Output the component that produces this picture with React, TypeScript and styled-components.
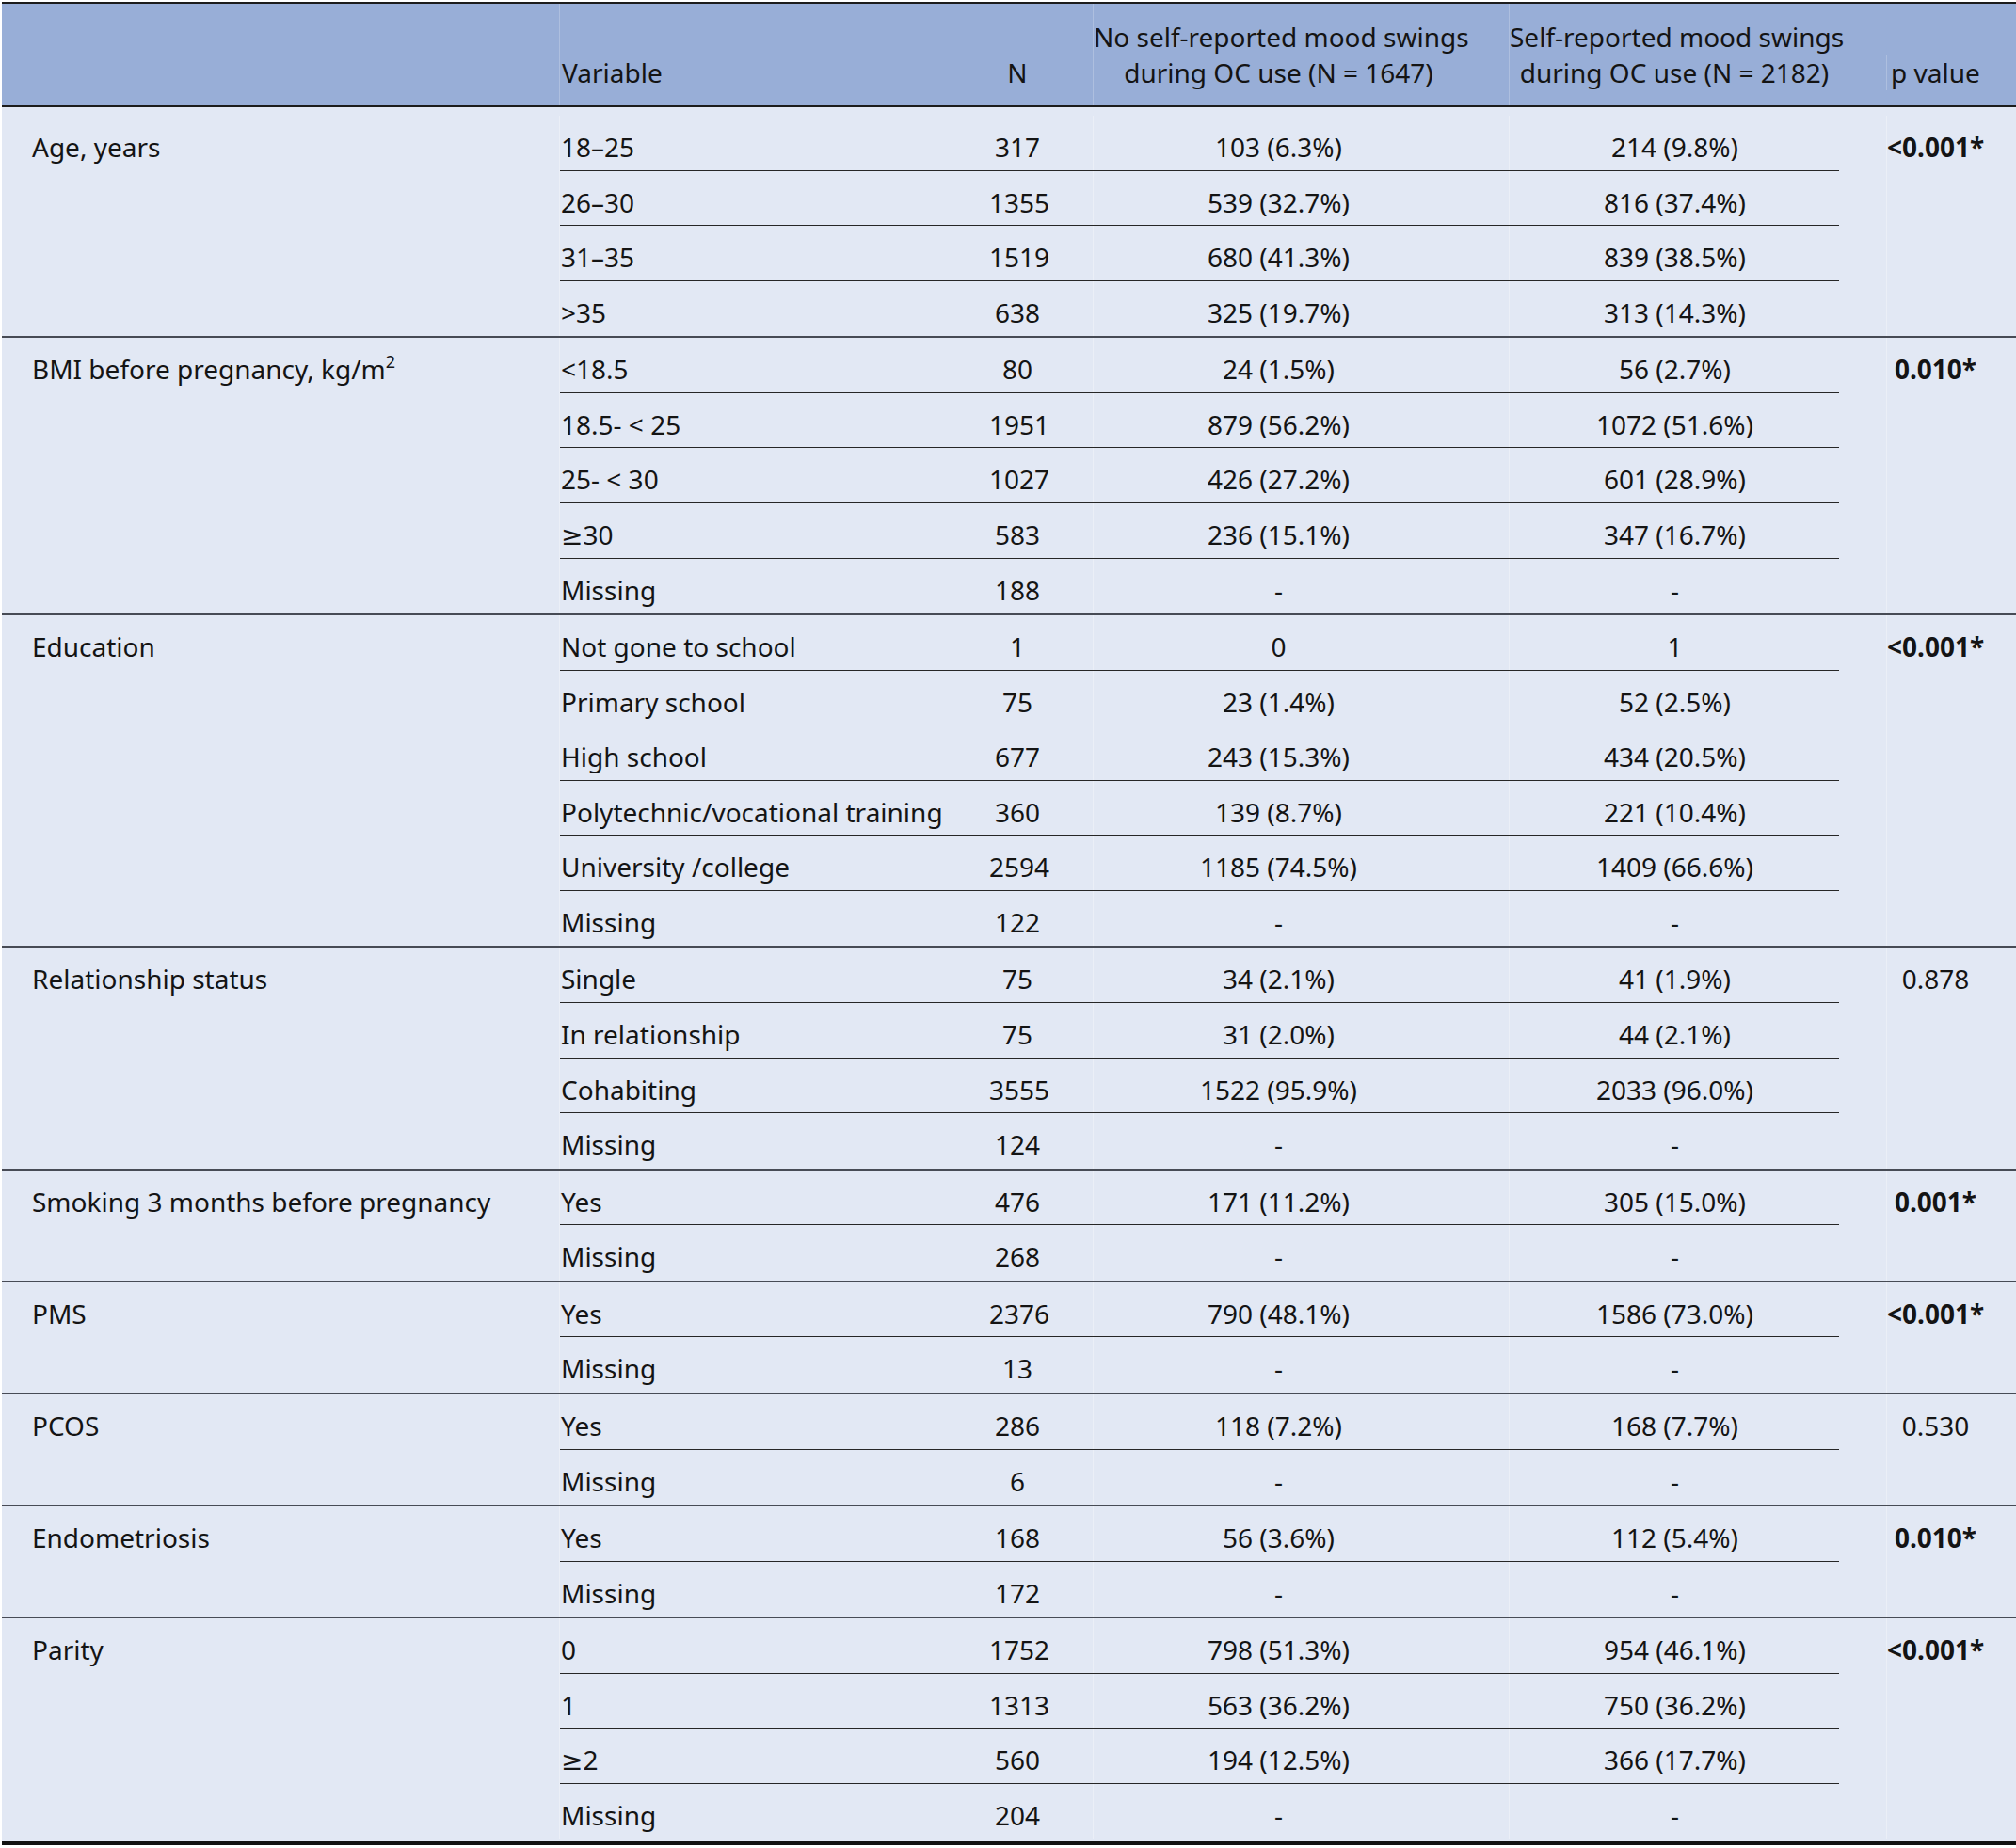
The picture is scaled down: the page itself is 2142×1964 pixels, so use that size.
import React from 'react'
import styled, { createGlobalStyle } from 'styled-components'

const GlobalStyle = createGlobalStyle`
    html, body {
        margin: 0;
        padding: 0;
        background: #ffffff;
    }
    body {
        font-family: "Noto Sans", "DejaVu Sans", sans-serif;
    }
`

const Table = styled.div`
    width: 2140px;
    margin: 2px 0 0 2px;
    border-top: 2px solid #1c1c1c;
    border-bottom: 4px solid #111111;
    background: #e2e8f4;
    color: #141414;
    font-size: 28px;
    line-height: 38px;
`

const Header = styled.div`
    display: grid;
    grid-template-columns: 592px 457px 110px 442px 351px 188px;
    background: #98aed7;
    border-bottom: 2px solid #1c1c1c;
`

const HeadCell = styled.div<{ $align?: string; $pr?: number; $pl?: number; $divider?: boolean }>`
    box-sizing: border-box;
    display: flex;
    flex-direction: column;
    justify-content: flex-end;
    padding: 16px ${({ $pr }) => $pr || 0}px 16px ${({ $pl, $align }) => ($align === 'left' ? 2 : $pl || 0)}px;
    text-align: ${({ $align }) => $align || 'center'};
    white-space: nowrap;
    min-height: 108px;
    border-left: ${({ $divider }) => ($divider ? '1px solid rgba(255, 255, 255, 0.22)' : 'none')};
    &:nth-child(2) {
        border-left: 1px solid rgba(255, 255, 255, 0.22);
    }
`

const Body = styled.div`
    padding: 9px 0 3px;
`

const GroupRow = styled.div`
    display: grid;
    grid-template-columns: 592px 1360px 188px;
    & + & {
        border-top: 2px solid #474b55;
    }
`

const LabelCell = styled.div`
    padding: 14px 0 0 32px;
    white-space: nowrap;
`

const SubRows = styled.div`
    display: flex;
    flex-direction: column;
    border-left: 1px solid rgba(255, 255, 255, 0.3);
`

const SubRow = styled.div`
    display: grid;
    grid-template-columns: 456px 110px 442px 352px;
    box-sizing: border-box;
    height: 58.57px;
    border-bottom: 1px solid #262626;
    &:last-child {
        border-bottom: none;
    }
`

const VarCell = styled.div`
    padding: 14px 0 0 1px;
    white-space: nowrap;
`

const NumCell = styled.div<{ $pr?: number; $divider?: boolean }>`
    box-sizing: border-box;
    padding: 14px ${({ $pr }) => $pr || 0}px 0 0;
    text-align: center;
    white-space: nowrap;
    border-left: ${({ $divider }) => ($divider ? '1px solid rgba(255, 255, 255, 0.3)' : 'none')};
`

const PCell = styled.div<{ $bold?: boolean }>`
    padding-left: 50px;
    font-weight: ${({ $bold }) => ($bold ? 700 : 400)};
    display: flex;
`

const PDivider = styled.div`
    flex: 1;
    box-sizing: border-box;
    padding: 14px 34px 0 0;
    text-align: center;
    white-space: nowrap;
    border-left: 1px solid rgba(255, 255, 255, 0.3);
`

const HeadP = styled.div`
    box-sizing: border-box;
    padding-right: 34px;
    text-align: center;
    border-left: 1px solid rgba(255, 255, 255, 0.22);
`

const Sup = styled.sup`
    font-size: 18px;
    line-height: 0;
    vertical-align: 12px;
`

type Group = {
  label: string
  p: string
  bold?: boolean
  rows: string[][]
}

const groups: Group[] = [
  {
    label: 'Age, years',
    p: '<0.001*',
    bold: true,
    rows: [
      ['18–25', '317', '103 (6.3%)', '214 (9.8%)'],
      ['26–30', '1355', '539 (32.7%)', '816 (37.4%)'],
      ['31–35', '1519', '680 (41.3%)', '839 (38.5%)'],
      ['>35', '638', '325 (19.7%)', '313 (14.3%)'],
    ],
  },
  {
    label: 'BMI',
    p: '0.010*',
    bold: true,
    rows: [
      ['<18.5', '80', '24 (1.5%)', '56 (2.7%)'],
      ['18.5- < 25', '1951', '879 (56.2%)', '1072 (51.6%)'],
      ['25- < 30', '1027', '426 (27.2%)', '601 (28.9%)'],
      ['≥30', '583', '236 (15.1%)', '347 (16.7%)'],
      ['Missing', '188', '-', '-'],
    ],
  },
  {
    label: 'Education',
    p: '<0.001*',
    bold: true,
    rows: [
      ['Not gone to school', '1', '0', '1'],
      ['Primary school', '75', '23 (1.4%)', '52 (2.5%)'],
      ['High school', '677', '243 (15.3%)', '434 (20.5%)'],
      ['Polytechnic/vocational training', '360', '139 (8.7%)', '221 (10.4%)'],
      ['University /college', '2594', '1185 (74.5%)', '1409 (66.6%)'],
      ['Missing', '122', '-', '-'],
    ],
  },
  {
    label: 'Relationship status',
    p: '0.878',
    rows: [
      ['Single', '75', '34 (2.1%)', '41 (1.9%)'],
      ['In relationship', '75', '31 (2.0%)', '44 (2.1%)'],
      ['Cohabiting', '3555', '1522 (95.9%)', '2033 (96.0%)'],
      ['Missing', '124', '-', '-'],
    ],
  },
  {
    label: 'Smoking 3 months before pregnancy',
    p: '0.001*',
    bold: true,
    rows: [
      ['Yes', '476', '171 (11.2%)', '305 (15.0%)'],
      ['Missing', '268', '-', '-'],
    ],
  },
  {
    label: 'PMS',
    p: '<0.001*',
    bold: true,
    rows: [
      ['Yes', '2376', '790 (48.1%)', '1586 (73.0%)'],
      ['Missing', '13', '-', '-'],
    ],
  },
  {
    label: 'PCOS',
    p: '0.530',
    rows: [
      ['Yes', '286', '118 (7.2%)', '168 (7.7%)'],
      ['Missing', '6', '-', '-'],
    ],
  },
  {
    label: 'Endometriosis',
    p: '0.010*',
    bold: true,
    rows: [
      ['Yes', '168', '56 (3.6%)', '112 (5.4%)'],
      ['Missing', '172', '-', '-'],
    ],
  },
  {
    label: 'Parity',
    p: '<0.001*',
    bold: true,
    rows: [
      ['0', '1752', '798 (51.3%)', '954 (46.1%)'],
      ['1', '1313', '563 (36.2%)', '750 (36.2%)'],
      ['≥2', '560', '194 (12.5%)', '366 (17.7%)'],
      ['Missing', '204', '-', '-'],
    ],
  },
]

// the BMI label carries a superscript unit
const renderLabel = (label: string) =>
  label === 'BMI' ? (
    <>
      BMI before pregnancy, kg/m<Sup>2</Sup>
    </>
  ) : (
    label
  )

const App: React.FC = () => {
  return (
    <>
      <GlobalStyle />
      <Table>
        <Header>
          <HeadCell />
          <HeadCell $align='left'>Variable</HeadCell>
          <HeadCell $pr={50}>N</HeadCell>
          <HeadCell $pr={48} $divider>
            <div>No self-reported mood swings</div>
            <div>during OC use (N = 1647)</div>
          </HeadCell>
          <HeadCell $divider>
            <div>Self-reported mood swings</div>
            <div>during OC use (N = 2182)</div>
          </HeadCell>
          <HeadCell $pl={50}>
            <HeadP>p value</HeadP>
          </HeadCell>
        </Header>
        <Body>
          {groups.map((g, gi) => (
            <GroupRow key={gi}>
              <LabelCell>{renderLabel(g.label)}</LabelCell>
              <SubRows>
                {g.rows.map((r, ri) => (
                  <SubRow key={ri}>
                    <VarCell>{r[0]}</VarCell>
                    <NumCell $pr={50}>{r[1]}</NumCell>
                    <NumCell $pr={48} $divider>{r[2]}</NumCell>
                    <NumCell $divider>{r[3]}</NumCell>
                  </SubRow>
                ))}
              </SubRows>
              <PCell $bold={g.bold}>
                <PDivider>{g.p}</PDivider>
              </PCell>
            </GroupRow>
          ))}
        </Body>
      </Table>
    </>
  )
}

export default App
